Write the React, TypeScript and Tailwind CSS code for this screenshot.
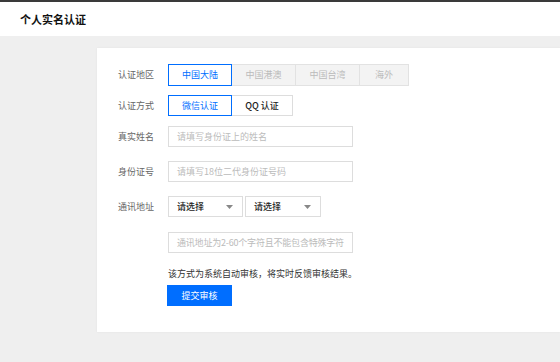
import React from 'react';

const font = { fontFamily: '"Noto Sans CJK SC", "Noto Sans", sans-serif' };

const regions = ['中国大陆', '中国港澳', '中国台湾', '海外'];

const Caret = () => (
  <svg width="7" height="4" viewBox="0 0 7 4" className="ml-auto">
    <path d="M0 0 L7 0 L3.5 4 Z" fill="#888" />
  </svg>
);

const Row: React.FC<{ label?: string; className?: string; children: React.ReactNode }> = ({
  label,
  className = '',
  children,
}) => (
  <div className={`flex items-center ${className}`}>
    <div className="w-[50px] shrink-0 text-[9px] text-[#666]">{label}</div>
    <div className="flex items-center">{children}</div>
  </div>
);

export default function App() {
  return (
    <div className="w-[560px] h-[362px] bg-[#efefef] overflow-hidden" style={font}>
      {/* Top strip + header */}
      <div className="h-[2px] bg-[#3a3a3a]" />
      <div className="h-[34px] bg-white flex items-center pl-[20px]">
        <h1 className="text-[11px] font-bold text-[#111]">个人实名认证</h1>
      </div>

      {/* Form card */}
      <div className="ml-[97px] mt-[12px] h-[284px] bg-white pl-[21px] pt-[16px] shadow-[0_0_2px_rgba(0,0,0,0.06)]">
        <Row label="认证地区">
          {regions.map((r, i) =>
            i === 0 ? (
              <div
                key={r}
                className="w-[64px] h-[22px] flex items-center justify-center border border-[#006eff] bg-white text-[9px] text-[#006eff]"
              >
                {r}
              </div>
            ) : (
              <div
                key={r}
                className={`${i === 3 ? 'w-[49px]' : 'w-[64px]'} h-[22px] flex items-center justify-center border border-l-0 border-[#e2e2e2] bg-[#f3f3f3] text-[9px] text-[#bbb]`}
              >
                {r}
              </div>
            ),
          )}
        </Row>

        <Row label="认证方式" className="mt-[9px]">
          <div className="w-[64px] h-[21px] flex items-center justify-center border border-[#006eff] text-[9px] text-[#006eff]">
            微信认证
          </div>
          <div className="w-[61px] h-[21px] flex items-center justify-center border border-l-0 border-[#ddd] text-[9px] text-[#222] font-medium">
            QQ 认证
          </div>
        </Row>

        <Row label="真实姓名" className="mt-[10px]">
          <div className="w-[185px] h-[21px] flex items-center px-[8px] border border-[#ddd] text-[9px] text-[#bbb]">
            请填写身份证上的姓名
          </div>
        </Row>

        <Row label="身份证号" className="mt-[14px]">
          <div className="w-[185px] h-[21px] flex items-center px-[8px] border border-[#ddd] text-[9px] text-[#bbb]">
            请填写18位二代身份证号码
          </div>
        </Row>

        <Row label="通讯地址" className="mt-[14px]">
          <div className="w-[75px] h-[21px] flex items-center pl-[8px] pr-[9px] border border-[#ddd] text-[9px] text-[#222] font-medium">
            请选择
            <Caret />
          </div>
          <div className="ml-[2px] w-[76px] h-[21px] flex items-center pl-[8px] pr-[9px] border border-[#ddd] text-[9px] text-[#222] font-medium">
            请选择
            <Caret />
          </div>
        </Row>

        <Row className="mt-[15px]">
          <div className="w-[185px] h-[21px] flex items-center pl-[8px] border border-[#ddd] text-[9px] text-[#bbb] whitespace-nowrap overflow-hidden tracking-[-0.2px]">
            通讯地址为2-60个字符且不能包含特殊字符
          </div>
        </Row>

        <div className="ml-[50px] mt-[14px] text-[9px] leading-[13px] text-[#333]">
          该方式为系统自动审核，将实时反馈审核结果。
        </div>
        <div className="ml-[49px] mt-[5px] w-[65px] h-[21px] flex items-center justify-center bg-[#006eff] text-[9px] text-white">
          提交审核
        </div>
      </div>
    </div>
  );
}
